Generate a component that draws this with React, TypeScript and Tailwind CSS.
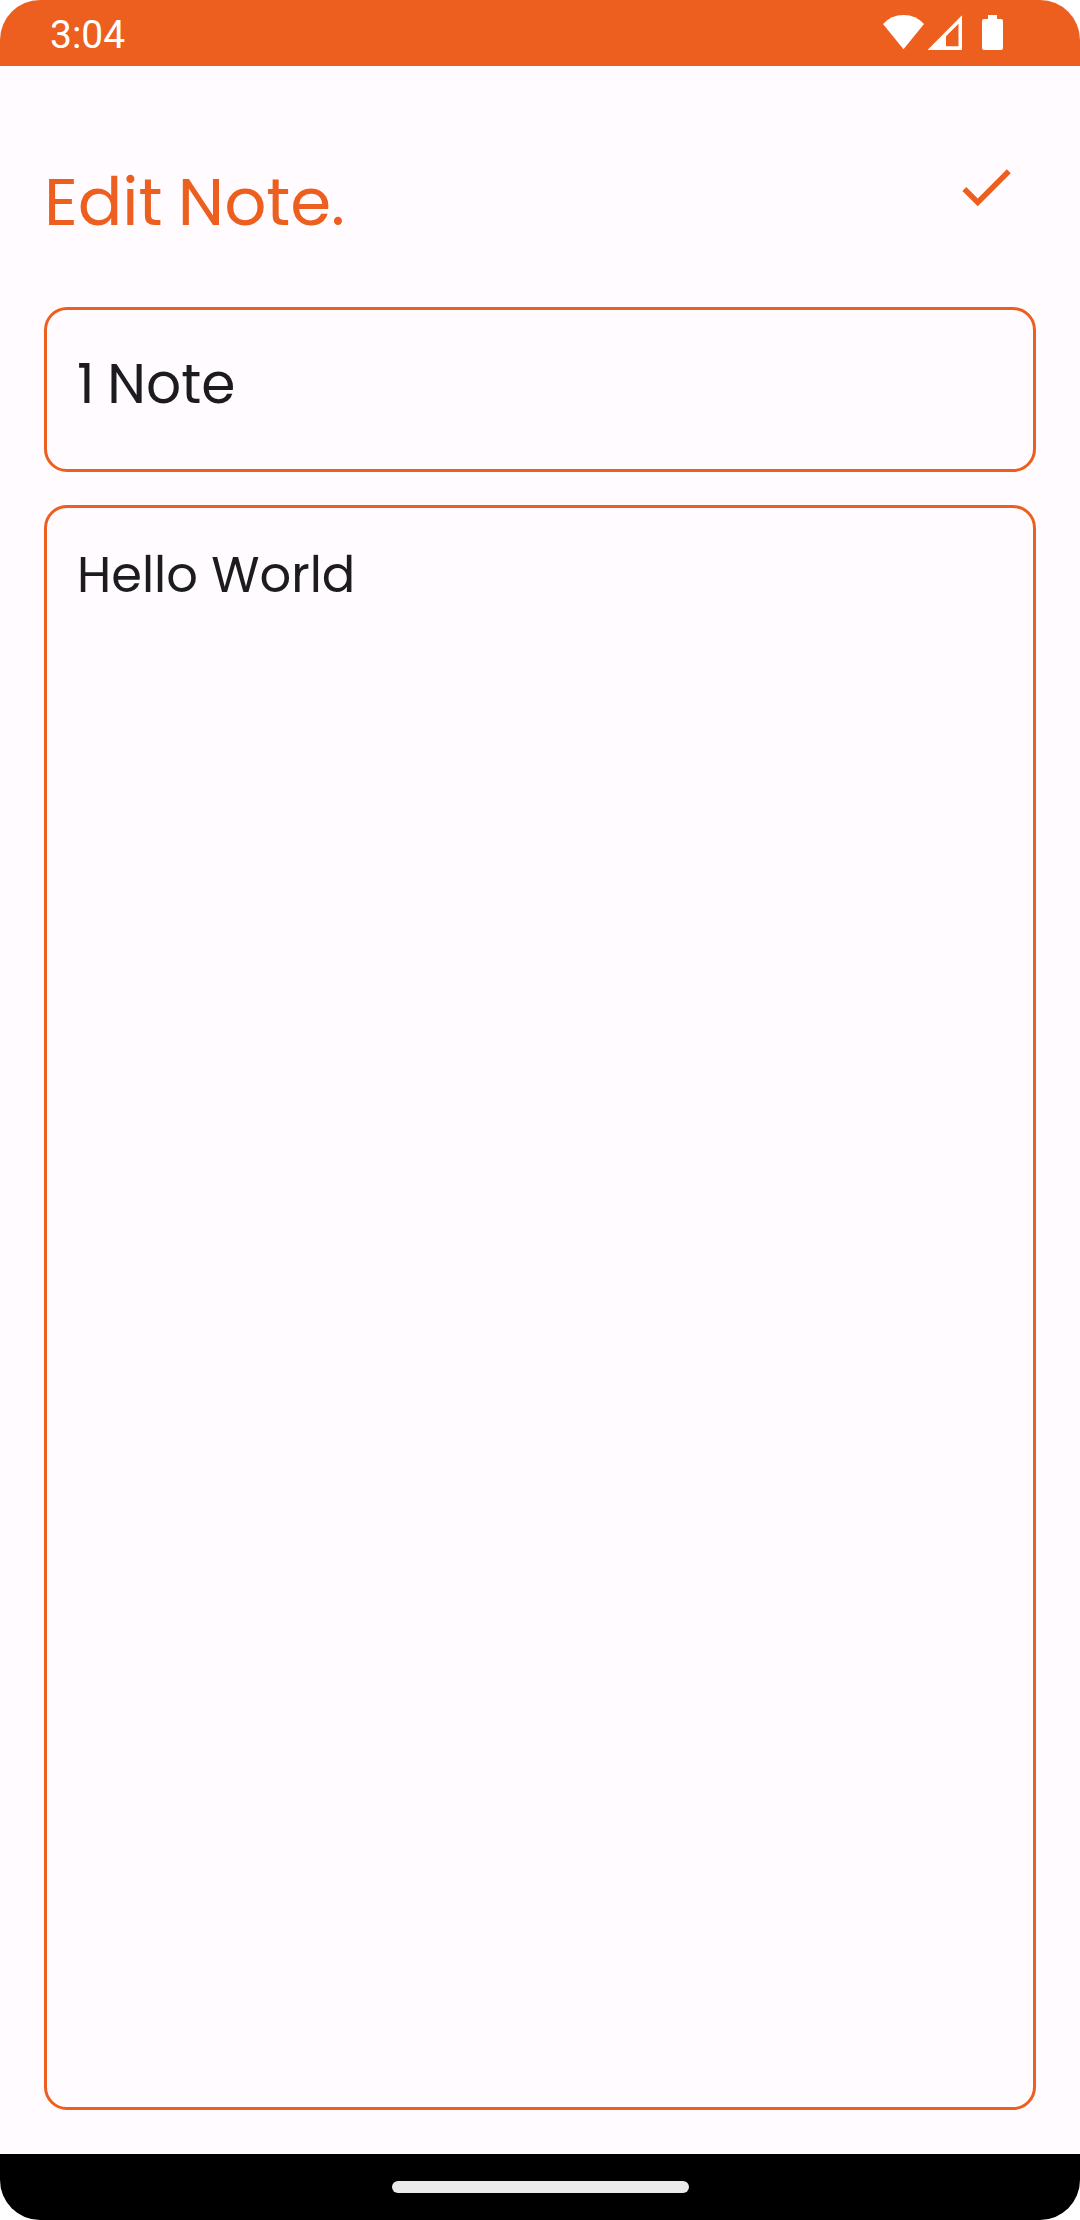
function StatusIcons() {
  return (
    <svg className="block h-[66px] w-[130px]" viewBox="880 0 130 66" fill="#fff">
      <path d="M883 24Q891 15 903.5 15T924 24L903.5 49.3Z" />
      <path fillRule="evenodd" d="M927.5 50L962 15.3V50ZM946 46.3H958.5V23.8L946 36.3Z" />
      <path d="M988 15h9v4h4q2 0 2 2v27q0 2-2 2h-17q-2 0-2-2V21q0-2 2-2h4z" />
    </svg>
  );
}

export default function App() {
  return (
    <div className="w-[1080px] h-[2220px] bg-white">
      <div className="flex h-full flex-col overflow-hidden rounded-[40px] bg-[#fffbff]">
        <header className="flex h-[66px] shrink-0 items-start justify-between bg-[#ed5f1e] pl-[50px] pr-[70px]">
          <span className="mt-[3px] font-['Roboto',sans-serif] text-[39px] leading-[64px] text-white">3:04</span>
          <StatusIcons />
        </header>
        <main className="flex min-h-0 flex-1 flex-col px-11 pb-11 font-['Poppins','Inter',sans-serif]">
          <div className="flex h-[241px] shrink-0 justify-between pr-[17px]">
            <h1 className="mt-24 text-[66px] leading-[80px] tracking-[-0.1px] text-[#ed5f1e] [word-spacing:-2px]">Edit Note.</h1>
            <button aria-label="Save note" className="mt-[88px] h-[66px] w-[66px]">
              <svg viewBox="0 0 24 24" fill="#ed5f1e" className="block h-full w-full">
                <path d="M9 16.17L4.83 12l-1.42 1.41L9 19 21 7l-1.41-1.41z" />
              </svg>
            </button>
          </div>
          <section className="mb-[33px] h-[165px] shrink-0 rounded-[23px] border-3 border-[#ed5f1e] pl-[30px] pt-11 text-[55px] leading-[60px] text-[#1c1b1f] [word-spacing:-2px]">
            1 Note
          </section>
          <section className="min-h-0 flex-1 rounded-[23px] border-3 border-[#ed5f1e] pl-[30px] pt-[37px] text-[49.5px] leading-[60px] text-[#1c1b1f]">
            Hello World
          </section>
        </main>
        <footer className="flex h-[66px] shrink-0 items-center justify-center bg-black">
          <div className="h-3 w-[297px] rounded-full bg-[#ebebeb]" />
        </footer>
      </div>
    </div>
  );
}
